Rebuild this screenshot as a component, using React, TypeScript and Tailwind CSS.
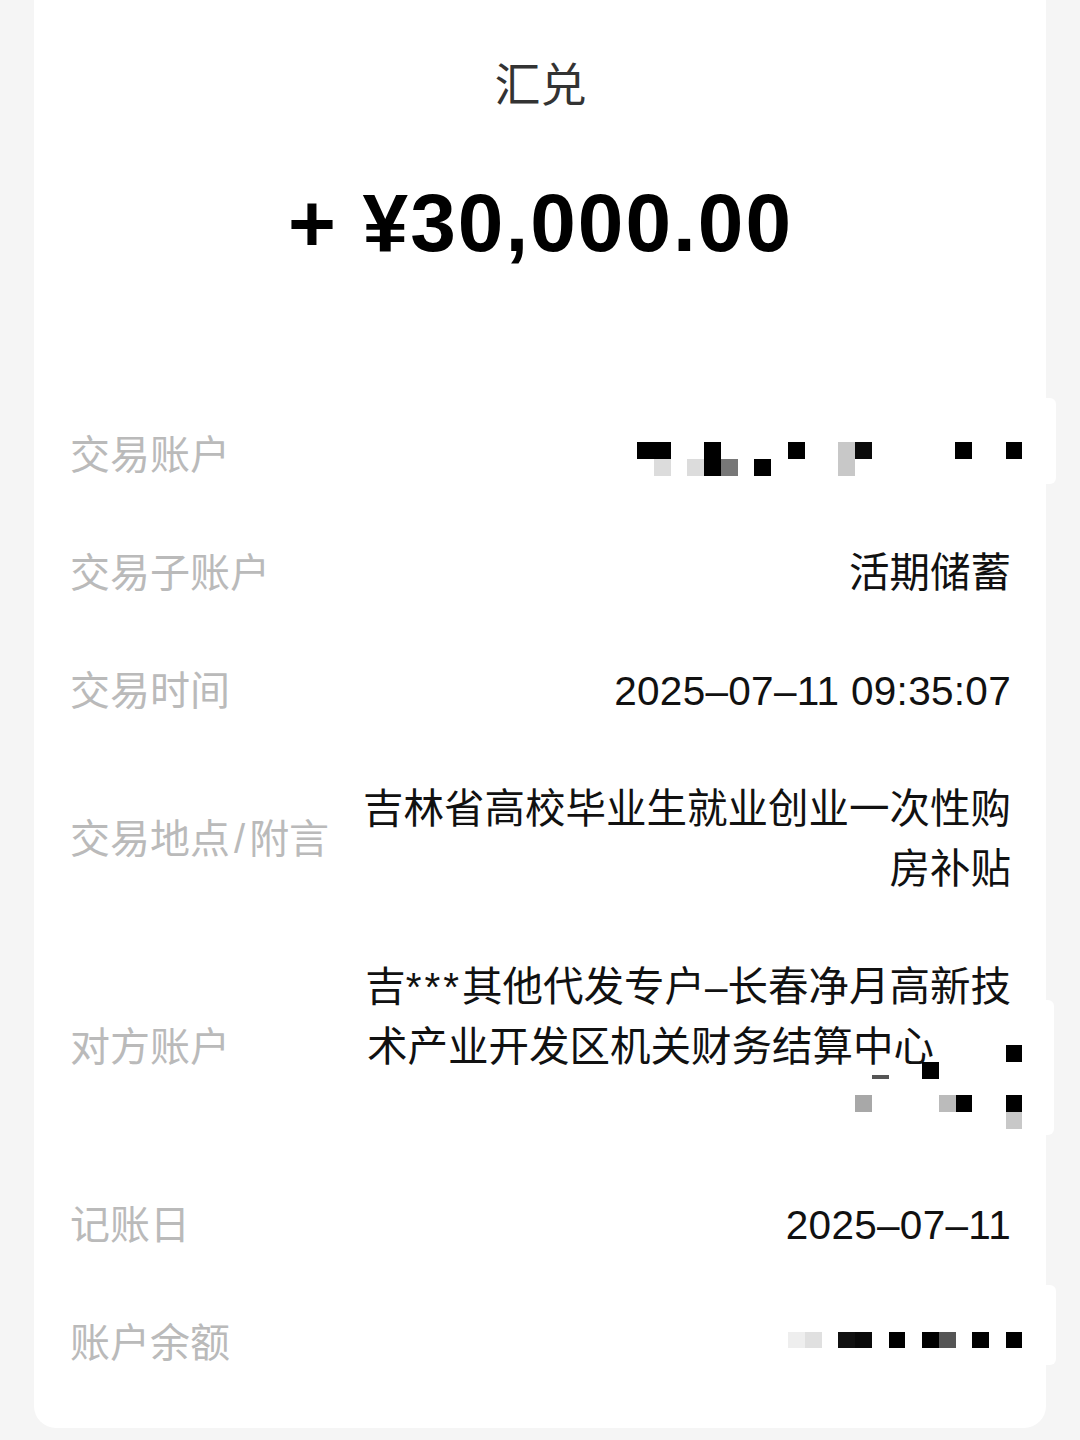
import React from "react";

type Cell = [number, number, string];

const CELL = 16.75;

// 打码块
function Mosaic({ cols, rows, cells, className }: { cols: number; rows: number; cells: Cell[]; className?: string }) {
  return (
    <svg
      width={cols * CELL}
      height={rows * CELL}
      viewBox={`0 0 ${cols * CELL} ${rows * CELL}`}
      className={className}
      shapeRendering="crispEdges"
    >
      {cells.map(([c, r, fill], i) => (
        <rect key={i} x={c * CELL} y={r * CELL} width={CELL} height={CELL} fill={fill} />
      ))}
    </svg>
  );
}

const accountCells: Cell[] = [
  [0, 0, "#000"],
  [1, 0, "#000"],
  [1, 1, "#dcdcdc"],
  [3, 1, "#dcdcdc"],
  [4, 0, "#000"],
  [4, 1, "#000"],
  [5, 1, "#777"],
  [7, 1, "#000"],
  [9, 0, "#000"],
  [12, 0, "#c8c8c8"],
  [12, 1, "#c8c8c8"],
  [13, 0, "#0a0a0a"],
  [19, 0, "#000"],
  [22, 0, "#000"],
];

const payeeCells: Cell[] = [
  [9, 0, "#000"],
  [4, 1, "#000"],
  [0, 3, "#a8a8a8"],
  [5, 3, "#bbb"],
  [6, 3, "#000"],
  [9, 3, "#000"],
  [9, 4, "#c8c8c8"],
];

const balanceCells: Cell[] = [
  [0, 0, "#eeeeee"],
  [1, 0, "#e0e0e0"],
  [3, 0, "#111"],
  [4, 0, "#0a0a0a"],
  [6, 0, "#000"],
  [8, 0, "#000"],
  [9, 0, "#555"],
  [11, 0, "#000"],
  [13, 0, "#000"],
];

function Row({ label, children }: { label: React.ReactNode; children: React.ReactNode }) {
  return (
    <div className="flex items-center justify-between py-[29px] leading-[60px]">
      <div className="shrink-0 text-[40px] text-[#bababa]">{label}</div>
      <div className="text-right text-[40.5px] text-[#111]">{children}</div>
    </div>
  );
}

export default function App() {
  return (
    <div
      className="min-h-[1440px] w-[1080px] bg-[#f5f5f5] px-[34px] pb-[10px]"
      style={{ fontFamily: '"Liberation Sans", "Noto Sans CJK SC", sans-serif' }}
    >
      <div className="relative rounded-b-[22px] bg-white pl-[36px] pr-[35px] pt-[55px] pb-[26px]">
        {/* 标题 */}
        <div className="text-center text-[46px] leading-[60px] text-[#333]">汇兑</div>
        {/* 金额 */}
        <div className="mt-[58px] text-center text-[82px] font-bold leading-[100px] tracking-[2px] text-black">
          + ¥30,000.00
        </div>

        <div className="mt-[123px]">
          <Row label="交易账户">
            <div className="flex justify-end">
              <Mosaic cols={23} rows={2} cells={accountCells} className="mr-[-11px] mt-[8px]" />
            </div>
          </Row>
          <Row label="交易子账户">活期储蓄</Row>
          <Row label="交易时间">
            <span className="tracking-[0.3px]">2025–07–11 09:35:07</span>
          </Row>
          <Row
            label={
              <>
                交易地点<span className="px-[4px]">/</span>附言
              </>
            }
          >
            <div className="w-[648px]">
              吉林省高校毕业生就业创业一次性购
              <br />
              房补贴
            </div>
          </Row>
          <Row label="对方账户">
            <div className="relative w-[648px] text-left">
              <div className="flex justify-end whitespace-nowrap">
                吉<span className="tracking-[3px]">***</span>其他代发专户–长春净月高新技
              </div>
              <div className="pl-[4px]">术产业开发区机关财务结算中心</div>
              <div className="h-[60px]" />
              <Mosaic cols={10} rows={5} cells={payeeCells} className="absolute right-[-11px] top-[88px]" />
              <div className="absolute left-[509px] top-[118px] h-[4px] w-[17px] bg-[#555]" />
            </div>
          </Row>
          <Row label="记账日">
            <span className="tracking-[0.3px]">2025–07–11</span>
          </Row>
          <Row label="账户余额">
            <div className="flex justify-end">
              <Mosaic cols={14} rows={1} cells={balanceCells} className="mr-[-11px] mt-[-6px]" />
            </div>
          </Row>
        </div>

        {/* 打码遮挡的白色块 */}
        <div className="absolute right-[-10px] top-[398px] h-[86px] w-[12px] rounded-r-[6px] bg-white" />
        <div className="absolute right-[-8px] top-[1000px] h-[135px] w-[12px] rounded-r-[6px] bg-white" />
        <div className="absolute right-[-10px] top-[1285px] h-[80px] w-[12px] rounded-r-[6px] bg-white" />
      </div>
    </div>
  );
}
